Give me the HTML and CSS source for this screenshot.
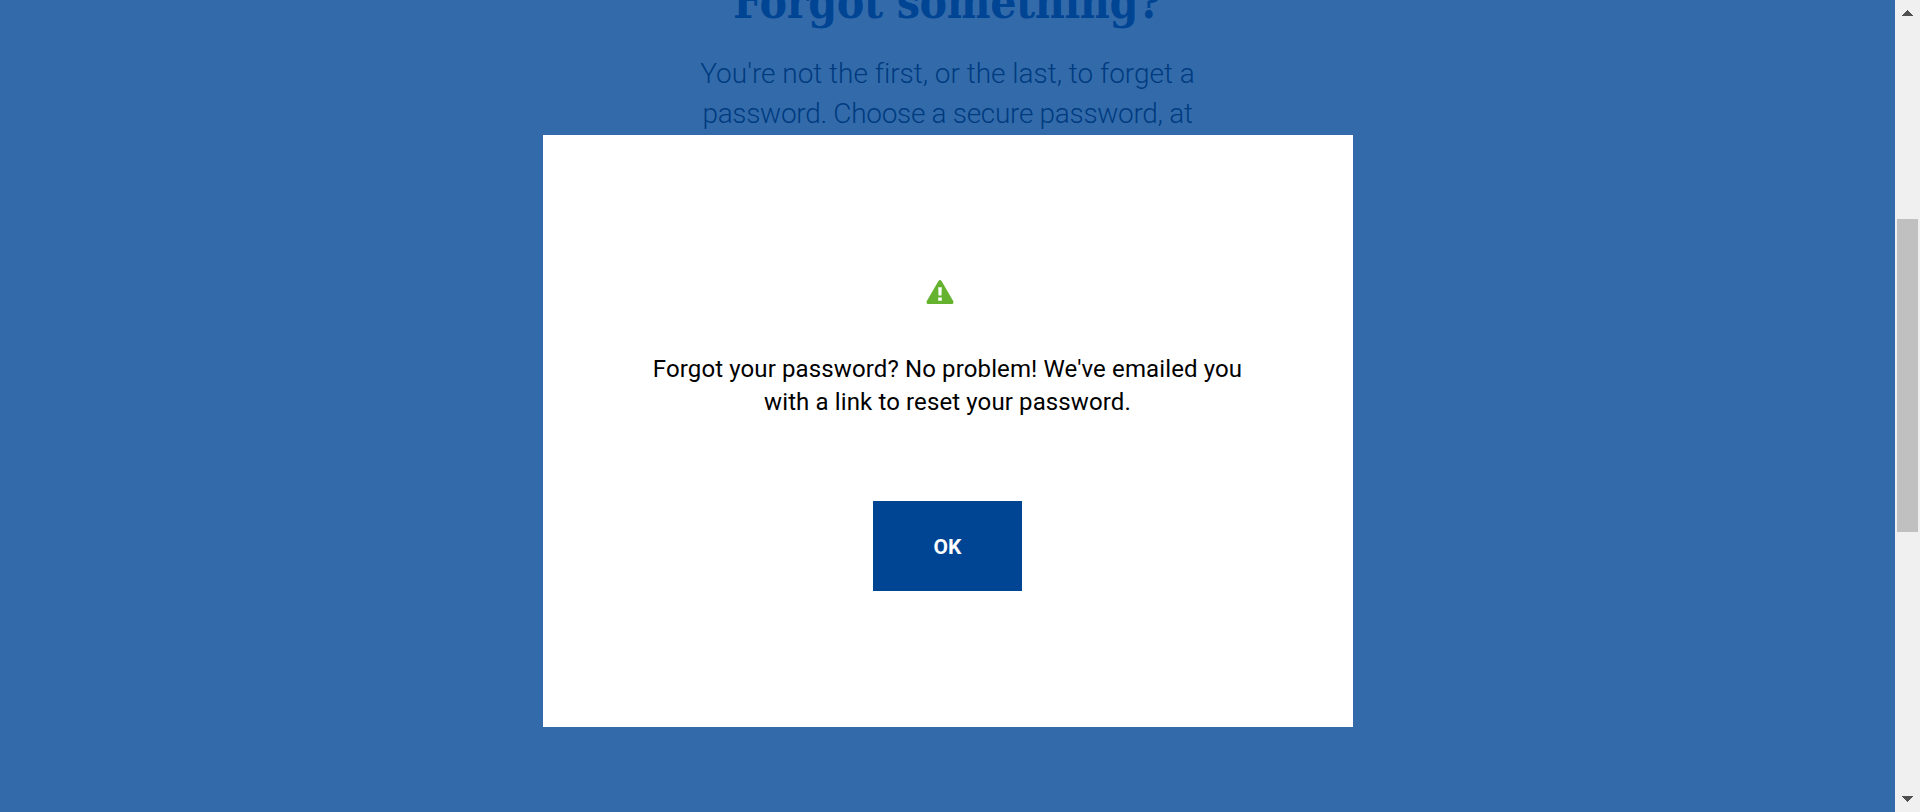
FILE: index.html
```html
<!DOCTYPE html>
<html lang="en">
<head>
<meta charset="utf-8">
<title>Forgot something?</title>
<link rel="stylesheet" href="styles.css">
</head>
<body>
<div class="viewport">
  <main class="page">
    <header class="intro">
      <h1 class="title">Forgot something?</h1>
      <p class="lead"><span class="lead-first">You're not the first, or the last, to forget a</span><br><span class="lead-second">password. Choose a secure password, at</span></p>
    </header>
    <section class="modal" role="dialog">
      <svg class="icon" viewBox="0 0 28 24"><path fill="#64b22e" fill-rule="evenodd" d="M12.3 1.2Q14-1 15.7 1.2L27.3 21.3Q28 24 25.7 24H2.3Q0 24 .7 21.3ZM12.2 7.2L12.5 15.6H15.5L15.8 7.2ZM12.2 17.5V20.7H15.8V17.5Z"/></svg>
      <p class="message"><span class="message-first">Forgot your password? No problem! We've emailed you</span><br><span class="message-second">with a link to reset your password.</span></p>
      <button class="ok">OK</button>
    </section>
  </main>
  <aside class="scrollbar">
    <svg class="arrow" viewBox="0 0 11 6" shape-rendering="crispEdges"><path fill="#505050" d="M0 6L5.5 0L11 6Z"/></svg>
    <div class="thumb"></div>
    <svg class="arrow arrow-down" viewBox="0 0 11 6" shape-rendering="crispEdges"><path fill="#505050" d="M0 0L5.5 6L11 0Z"/></svg>
  </aside>
</div>
</body>
</html>
```
FILE: styles.css
```css
* { box-sizing: border-box; }
body { margin: 0; overflow: hidden; }
.viewport { display: flex; width: 1920px; height: 812px; overflow: hidden; }
.page { width: 1895px; height: 812px; background: #336baa; display: flex; flex-direction: column; align-items: center; }
.intro { height: 135px; width: 810px; text-align: center; white-space: nowrap; }
.title { margin: -30px 0 0; height: 84px; font: bold 46px/64px "DejaVu Serif Condensed", "DejaVu Serif", serif; font-stretch: condensed; letter-spacing: -0.4px; color: #004494; }
.lead { margin: 0; font: 300 28px/40px Roboto, sans-serif; color: #003b80; }
.lead-first { letter-spacing: -0.03px; }
.lead-second { letter-spacing: -0.31px; }
.modal { width: 810px; height: 592px; background: #fff; display: flex; flex-direction: column; align-items: center; padding-top: 145px; }
.icon { width: 28px; height: 24px; margin-right: 16px; flex: none; }
.message { margin: 49px 0 0; height: 148px; font: 24px/33px Roboto, sans-serif; color: #000; text-align: center; white-space: nowrap; }
.message-first { letter-spacing: 0.12px; }
.message-second { letter-spacing: 0.12px; }
.ok { width: 149px; height: 90px; padding: 1px 0 0; border: 0; background: #004494; color: #fff; font: bold 21px/30px Roboto, sans-serif; }
.scrollbar { width: 25px; height: 812px; background: #f0f0f0; display: flex; flex-direction: column; align-items: center; padding: 10px 0; }
.arrow { width: 11px; height: 6px; flex: none; }
.thumb { width: 21px; height: 313px; margin: 203px 0 264px; background: #c0c0c0; flex: none; }
```
